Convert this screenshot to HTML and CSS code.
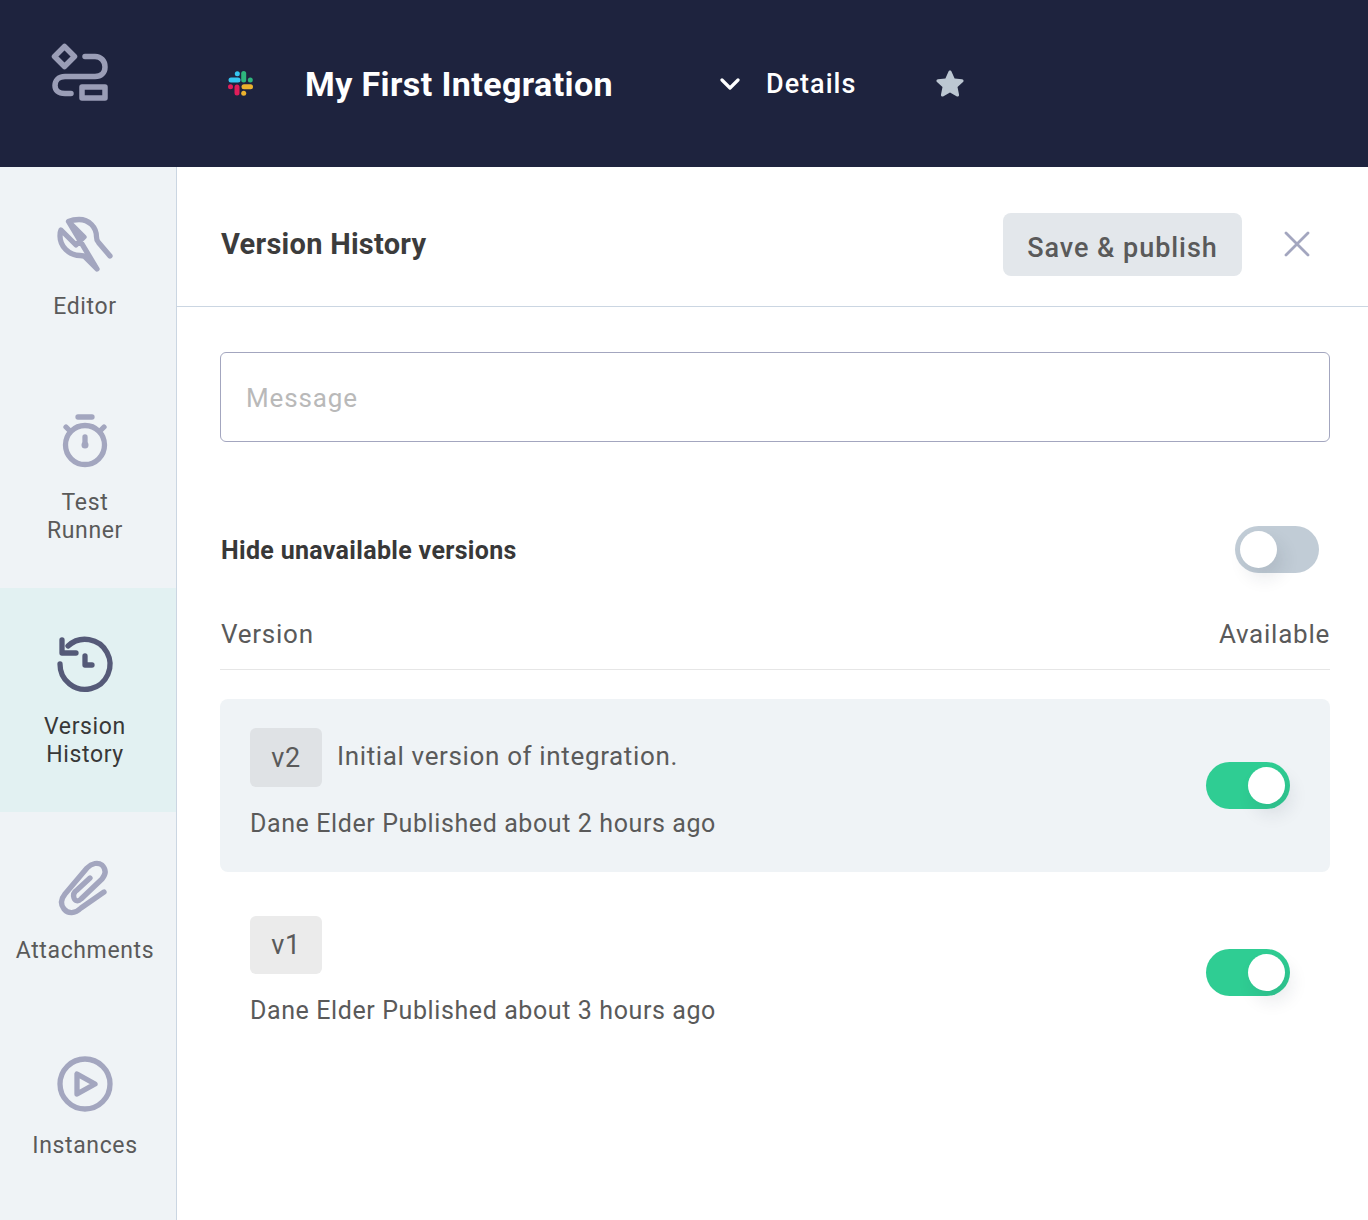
FILE: index.html
```html
<!DOCTYPE html>
<html lang="en">
<head>
<meta charset="utf-8">
<title>My First Integration</title>
<link rel="stylesheet" href="styles.css">
</head>
<body>
<header class="topbar">
  <svg class="logo" viewBox="50 42 60 62" fill="none" stroke="#9a9db6" stroke-width="5.5" stroke-linecap="round" stroke-linejoin="round">
    <path d="M64.500 46.500L74.500 56.500L64.500 66.500L54.500 56.500Z"/>
    <path d="M85 56.500H95C101 56.500 105 61 105 67C105 73 101 76.500 95 76.500H65C58 76.500 55 81 55 85.500C55 90 58 93.500 65 93.500H71"/>
    <rect x="82" y="87" width="23" height="11" stroke-linejoin="round"/>
  </svg>
  <svg class="slack" viewBox="228 71 26 26" fill="none" stroke-width="5" stroke-linecap="round">
    <path d="M231 80H238" stroke="#36c5f0"/><path d="M237.300 73.700h.01" stroke="#36c5f0"/>
    <path d="M243.700 73.500V80" stroke="#2eb67d"/><path d="M250.300 80h.01" stroke="#2eb67d"/>
    <path d="M230.500 86.700h.01" stroke="#e01e5a"/><path d="M237 87V93" stroke="#e01e5a"/>
    <path d="M244 86.700H250.500" stroke="#ecb22e"/><path d="M243.700 93.300h.01" stroke="#ecb22e"/>
  </svg>
  <h1 class="app-title">My First Integration</h1>
  <svg class="chevron" viewBox="0 0 20 12" fill="none" stroke="#fff" stroke-width="3.200" stroke-linecap="round" stroke-linejoin="round"><path d="M2 2L10 10L18 2"/></svg>
  <span class="details">Details</span>
  <svg class="star" viewBox="0 0 28 27" fill="#bcc7d2"><path d="M14 0.500C14.800 0.500 15.300 1 15.600 1.700L18.600 8.400L26 9.300C27.500 9.500 28.100 11.100 27 12.100L21.500 17L23 24.500C23.300 26 21.800 27 20.500 26.300L14 22.600L7.500 26.300C6.200 27 4.700 26 5 24.500L6.500 17L1 12.100C-0.100 11.100 0.500 9.500 2 9.300L9.400 8.400L12.400 1.700C12.700 1 13.200 0.500 14 0.500Z"/></svg>
</header>
<div class="shell">
  <nav class="sidebar">
    <a class="nav-item">
      <svg class="nav-icon" viewBox="53 212 64 64"><path d="M68.500 221.500C72 220 75 219.500 79 219.500C89 219.500 96.500 227 96.500 237C96.500 239.500 97 241 98.500 242.500L110 256M97 269L85 257C83.500 255.500 82 255.500 80 255.500C69 255.500 60 246.500 60 236C60 233.500 60 232 61 230L76 245L84 237L68.500 221.500Z"/></svg>
      <span class="nav-label">Editor</span>
    </a>
    <a class="nav-item">
      <svg class="nav-icon" viewBox="53 408 64 64"><circle cx="85" cy="445" r="19.500"/><path d="M78 417H92M66 427L69 430M104 427L101 430"/><path class="hand" d="M85 437V444"/><circle class="bulb" cx="85" cy="445" r="3.500"/></svg>
      <span class="nav-label">Test<br>Runner</span>
    </a>
    <a class="nav-item active">
      <svg class="nav-icon" viewBox="53 632 64 64"><path d="M60 664A25 25 0 1 0 68 646"/><path d="M62 640V653H76M85 656V665H92"/></svg>
      <span class="nav-label">Version<br>History</span>
    </a>
    <a class="nav-item">
      <svg class="nav-icon" viewBox="53 856 64 64"><path d="M104 892L81 908C75 914 68 914 64 909C60 904 61 899 65 894L87 868C92 863 98 862 102 865C106 869 106 874 102 879L81 899C78 902 75 901 74 898C73 895 74 892 77 890L90 878"/></svg>
      <span class="nav-label">Attachments</span>
    </a>
    <a class="nav-item">
      <svg class="nav-icon" viewBox="53 1052 64 64"><circle cx="85" cy="1084" r="25"/><path d="M77 1074V1094L95 1084Z"/></svg>
      <span class="nav-label">Instances</span>
    </a>
  </nav>
  <main class="panel">
    <div class="panel-head">
      <h2 class="panel-title">Version History</h2>
      <button class="publish">Save &amp; publish</button>
      <svg class="close" viewBox="0 0 26 26" fill="none" stroke="#a3a6bf" stroke-width="2.800" stroke-linecap="round"><path d="M2 2L24 24M24 2L2 24"/></svg>
    </div>
    <div class="panel-body">
      <input class="message" placeholder="Message" aria-label="Message">
      <div class="hide-row">
        <span class="hide-label">Hide unavailable versions</span>
        <span class="toggle off"><span class="knob"></span></span>
      </div>
      <div class="table-head"><span>Version</span><span>Available</span></div>
      <div class="version selected">
        <div class="version-info">
          <div class="version-top"><span class="badge">v2</span><span class="version-msg">Initial version of integration.</span></div>
          <div class="version-meta">Dane Elder Published about 2 hours ago</div>
        </div>
        <span class="toggle on"><span class="knob"></span></span>
      </div>
      <div class="version plain">
        <div class="version-info">
          <div class="version-top"><span class="badge">v1</span></div>
          <div class="version-meta">Dane Elder Published about 3 hours ago</div>
        </div>
        <span class="toggle on"><span class="knob"></span></span>
      </div>
    </div>
  </main>
</div>
</body>
</html>
```
FILE: styles.css
```css
* { box-sizing: border-box; }
html, body { margin: 0; height: 100%; }
body {
  font-family: Roboto, "Liberation Sans", sans-serif;
  color: #5a5a5a;
  background: #fff;
  height: 1220px;
  overflow: hidden;
  display: flex;
  flex-direction: column;
}
.topbar {
  height: 167px;
  flex: none;
  background: #1e233e;
  display: flex;
  align-items: center;
}
.logo { width: 60px; height: 62px; margin: -22px 0 0 50px; flex: none; }
.slack { width: 26px; height: 26px; margin: 0 0 0 118px; flex: none; }
.app-title {
  margin: 0 0 0 51px;
  width: 415px;
  flex: none;
  font-size: 34px;
  font-weight: 700;
  color: #fff;
  letter-spacing: 0.4px;
}
.chevron { width: 20px; height: 12px; flex: none; }
.details { margin-left: 26px; font-size: 27px; font-weight: 500; color: #fff; letter-spacing: 1px; width: 90px; flex: none; }
.star { width: 28px; height: 27px; margin-left: 80px; flex: none; }
.shell { flex: 1; display: flex; min-height: 0; }
.sidebar {
  width: 177px;
  flex: none;
  background: #eff3f6;
  border-right: 1px solid #cbd6e2;
  padding-top: 1px;
}
.nav-item {
  display: flex;
  flex-direction: column;
  align-items: center;
  padding: 44px 6px 43px 0;
  gap: 17px;
  text-align: center;
  font-size: 23px;
  line-height: 28px;
  letter-spacing: 0.64px;
  color: #5a5a5a;
}
.nav-item:last-child { gap: 16px; }
.nav-item.active { background: #e2f1f2; color: #383838; }
.nav-icon {
  width: 64px; height: 64px; flex: none;
  fill: none; stroke: #a3a6bf; stroke-width: 5.300;
  stroke-linecap: round; stroke-linejoin: round;
}
.active .nav-icon { stroke: #555a78; }
.nav-icon .bulb { fill: #a3a6bf; stroke: none; }
.nav-label { display: block; }
.panel { flex: 1; min-width: 0; }
.panel-head {
  height: 140px;
  border-bottom: 1px solid #cbd6e2;
  display: flex;
  align-items: center;
  padding: 15px 58px 0 44px;
}
.panel-title { margin: 0; font-size: 29px; font-weight: 700; color: #3c3c3c; flex: 1; letter-spacing: 0.27px; }
.publish {
  width: 239px; height: 63px;
  border: 0; border-radius: 8px;
  background: #e3e7eb;
  color: #5a5a5a;
  padding: 7px 0 0;
  font: 500 27px Roboto, sans-serif;
  letter-spacing: 0.95px;
}
.close { width: 26px; height: 26px; margin-left: 42px; flex: none; }
.panel-body { padding: 45px 38px 0 43px; }
.message {
  display: block; width: 100%; height: 90px;
  border: 1px solid #a3a6bf; border-radius: 6px;
  padding: 2px 25px 0;
  font: 26px Roboto, sans-serif;
  letter-spacing: 0.85px;
  color: #5a5a5a;
  outline: none;
}
.message::placeholder { color: #b9b9b9; opacity: 1; }
.hide-row {
  margin-top: 84px; height: 47px;
  display: flex; align-items: center; justify-content: space-between;
  padding-right: 11px;
}
.hide-label { font-size: 25px; font-weight: 700; color: #383838; letter-spacing: 0.32px; padding: 2px 0 0 1px; }
.table-head {
  margin-top: 26px; height: 71px;
  display: flex; justify-content: space-between; align-items: center;
  border-bottom: 1px solid #e6e6e6;
  font-size: 26px; letter-spacing: 0.75px; padding-left: 1px;
}
.version {
  display: flex; align-items: center; justify-content: space-between;
  padding: 29px 40px 30px 30px;
  border-radius: 8px;
}
.version.selected { background: #eff3f6; margin-top: 29px; }
.version.plain { padding-top: 44px; }
.version-top { display: flex; align-items: flex-start; gap: 15px; }
.badge {
  width: 72px; height: 58px; border-radius: 6px;
  background: #ebebeb;
  display: flex; align-items: center; justify-content: center;
  font-size: 27px; letter-spacing: 0.5px;
}
.selected .badge { background: #dfe2e5; height: 59px; }
.version-msg { font-size: 26px; line-height: 56px; letter-spacing: 0.64px; }
.version-meta { margin-top: 18px; font-size: 25px; line-height: 37px; letter-spacing: 0.6px; }
.toggle {
  width: 84px; height: 47px; border-radius: 24px;
  display: flex; align-items: center; padding: 0 5px;
  flex: none;
}
.toggle.off { background: #c1ccd6; justify-content: flex-start; }
.toggle.on { background: #2fcd93; justify-content: flex-end; }
.knob { width: 37px; height: 37px; border-radius: 50%; background: #fff; box-shadow: 6px 10px 18px rgba(30, 35, 62, 0.1); }
```
